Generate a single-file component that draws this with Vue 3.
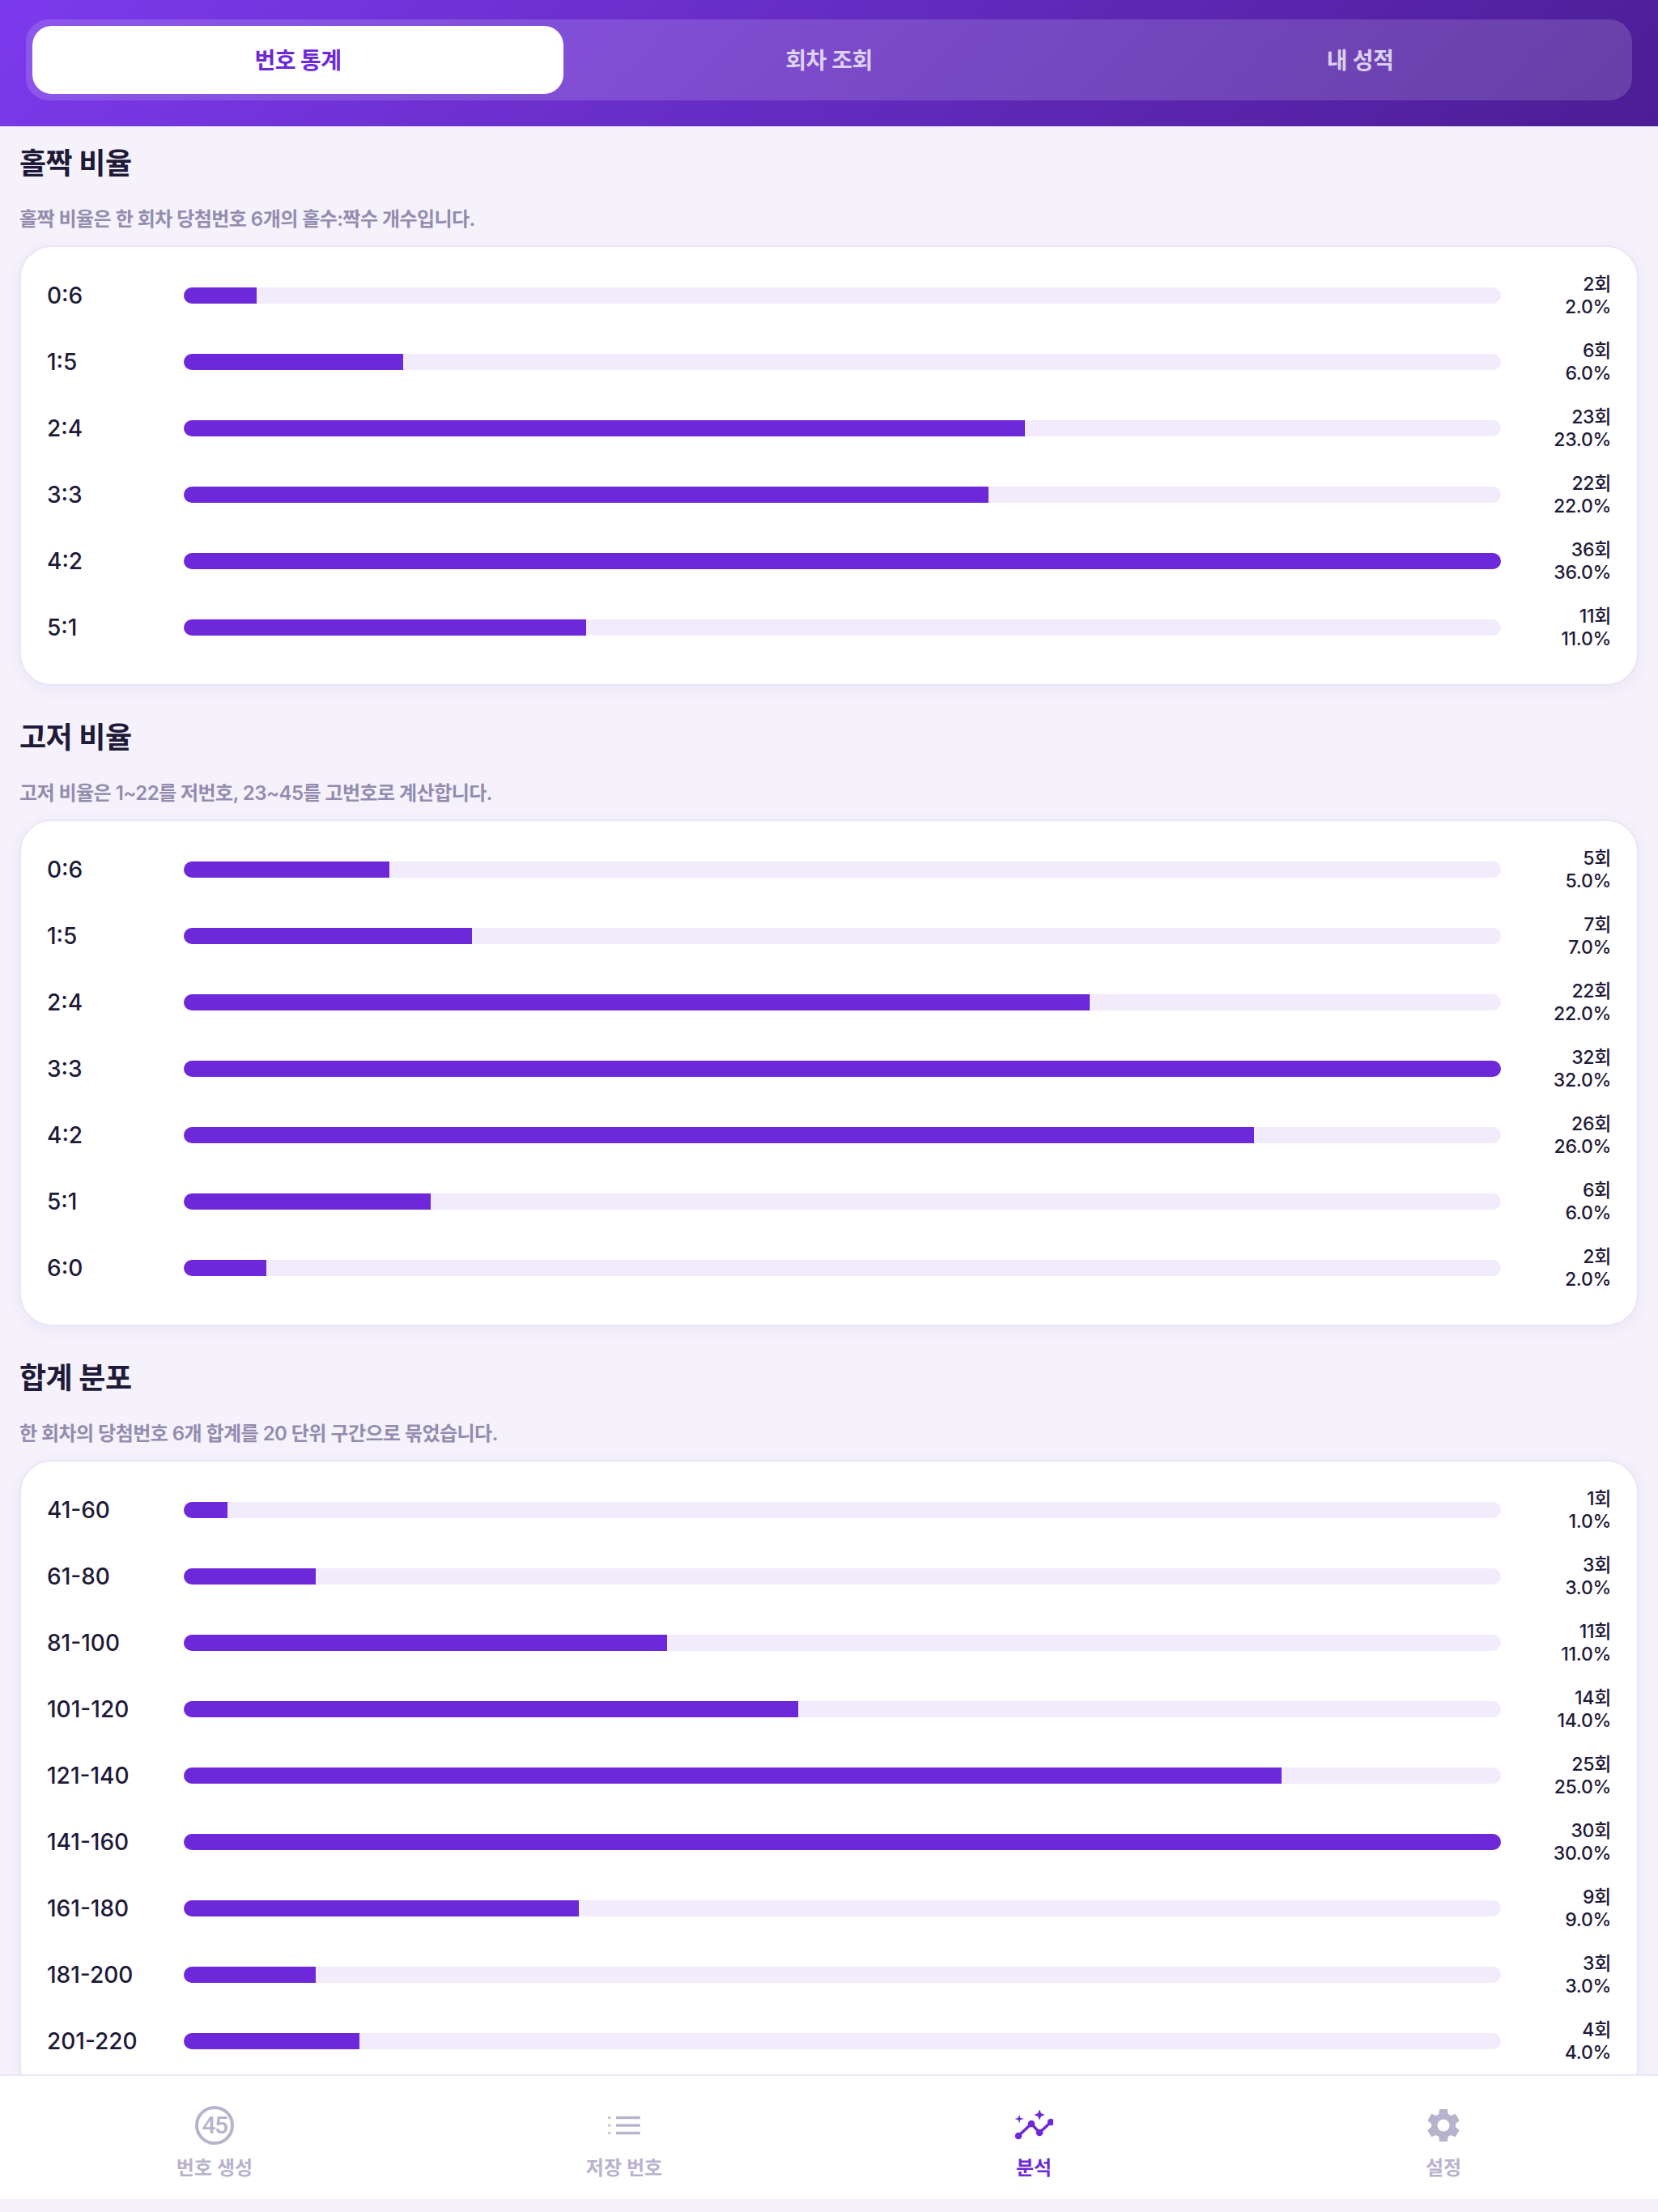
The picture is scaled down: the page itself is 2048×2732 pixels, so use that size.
<script setup>
const tabs = ['번호 통계', '회차 조회', '내 성적']
const sections = [
  {
    title: '홀짝 비율',
    desc: '홀짝 비율은 한 회차 당첨번호 6개의 홀수:짝수 개수입니다.',
    rows: [['0:6', 2], ['1:5', 6], ['2:4', 23], ['3:3', 22], ['4:2', 36], ['5:1', 11]],
    max: 36,
  },
  {
    title: '고저 비율',
    desc: '고저 비율은 1~22를 저번호, 23~45를 고번호로 계산합니다.',
    rows: [['0:6', 5], ['1:5', 7], ['2:4', 22], ['3:3', 32], ['4:2', 26], ['5:1', 6], ['6:0', 2]],
    max: 32,
  },
  {
    title: '합계 분포',
    desc: '한 회차의 당첨번호 6개 합계를 20 단위 구간으로 묶었습니다.',
    rows: [['41-60', 1], ['61-80', 3], ['81-100', 11], ['101-120', 14], ['121-140', 25], ['141-160', 30], ['161-180', 9], ['181-200', 3], ['201-220', 4]],
    max: 30,
  },
]
</script>

<template>
  <div class="app">
    <header class="header">
      <div class="tabs">
        <div v-for="(t, i) in tabs" :key="t" class="tab" :class="{ active: i === 0 }">{{ t }}</div>
      </div>
    </header>
    <main class="main">
      <section v-for="s in sections" :key="s.title" class="section">
        <h2 class="title">{{ s.title }}</h2>
        <p class="desc">{{ s.desc }}</p>
        <div class="card">
          <div v-for="r in s.rows" :key="r[0]" class="row">
            <div class="label">{{ r[0] }}</div>
            <div class="track"><div class="fill" :style="{ width: (r[1] / s.max) * 100 + '%' }"></div></div>
            <div class="value"><div>{{ r[1] }}회</div><div>{{ r[1].toFixed(1) }}%</div></div>
          </div>
        </div>
      </section>
    </main>
    <nav class="nav">
      <div class="nav-item">
        <div class="icon"><div class="ball">45</div></div>
        <span>번호 생성</span>
      </div>
      <div class="nav-item">
        <div class="icon">
          <svg width="48" height="48" viewBox="0 0 48 48" fill="#b8b2cc">
            <circle cx="5.700" cy="14.500" r="1.600" /><circle cx="5.700" cy="24" r="1.600" /><circle cx="5.700" cy="33.500" r="1.600" />
            <rect x="14" y="12.800" width="29.700" height="3.400" /><rect x="14" y="22.300" width="29.700" height="3.400" /><rect x="14" y="31.800" width="29.700" height="3.400" />
          </svg>
        </div>
        <span>저장 번호</span>
      </div>
      <div class="nav-item on">
        <div class="icon">
          <svg width="48" height="48" viewBox="0 0 48 48">
            <path d="M5 37 L21 22 L31 33 L45 20" fill="none" stroke="#6d28d9" stroke-width="3.500" />
            <circle cx="5" cy="37" r="4.300" fill="#6d28d9" /><circle cx="21" cy="22" r="4.300" fill="#6d28d9" /><circle cx="31" cy="33" r="4.300" fill="#6d28d9" /><circle cx="45" cy="20" r="4.300" fill="#6d28d9" />
            <path d="M31 4.400 L33 9 L37.500 11 L33 13 L31 17.600 L29 13 L24.500 11 L29 9 Z" fill="#6d28d9" />
            <path d="M6 10.500 L7.300 14.700 L11.500 16 L7.300 17.300 L6 21.500 L4.700 17.300 L.5 16 L4.700 14.700 Z" fill="#6d28d9" />
          </svg>
        </div>
        <span>분석</span>
      </div>
      <div class="nav-item">
        <div class="icon">
          <svg class="gear" width="50" height="50" viewBox="0 0 24 24" fill="#b8b2cc">
            <path fill-rule="evenodd" d="M19.14 12.94c.04-.3.06-.61.06-.94 0-.32-.02-.64-.07-.94l2.03-1.58a.49.49 0 0 0 .12-.61l-1.92-3.32a.49.49 0 0 0-.59-.22l-2.39.96c-.5-.38-1.030-.7-1.620-.94l-.36-2.540a.48.48 0 0 0-.48-.41h-3.840a.48.48 0 0 0-.47.41l-.36 2.540c-.59.24-1.130.57-1.620.94l-2.390-.96a.48.48 0 0 0-.59.22L2.740 8.870a.48.48 0 0 0 .12.61l2.030 1.580c-.05.3-.09.63-.09.94s.02.64.07.94l-2.030 1.580a.49.49 0 0 0-.12.61l1.920 3.320c.12.22.37.29.59.22l2.390-.96c.5.38 1.030.7 1.620.94l.36 2.540c.05.24.24.41.48.41h3.840c.24 0 .44-.17.47-.41l.36-2.540c.59-.24 1.130-.56 1.620-.94l2.390.96c.22.08.47 0 .59-.22l1.920-3.320a.48.48 0 0 0-.12-.61l-2.010-1.580zM12 15.600A3.610 3.610 0 0 1 8.400 12 3.610 3.610 0 0 1 12 8.400a3.610 3.610 0 0 1 3.600 3.600 3.610 3.610 0 0 1-3.600 3.600z" />
          </svg>
        </div>
        <span>설정</span>
      </div>
    </nav>
  </div>
</template>

<style scoped>
.app {
  width: 2048px;
  height: 2732px;
  display: flex;
  flex-direction: column;
  overflow: hidden;
  background: #f5f2fc;
  font-family: Inter, "Noto Sans CJK KR", sans-serif;
  color: #1e1a38;
}
.header {
  flex: none;
  height: 156px;
  box-sizing: border-box;
  padding: 24px 32px 0;
  background: linear-gradient(135deg, #7c3aed 0%, #4c1d95 100%);
}
.tabs {
  display: flex;
  height: 100px;
  box-sizing: border-box;
  padding: 8px;
  border-radius: 28px;
  background: rgba(255, 255, 255, 0.15);
}
.tab {
  flex: 1;
  display: flex;
  align-items: center;
  justify-content: center;
  padding-bottom: 2px;
  border-radius: 24px;
  font-size: 28px;
  font-weight: 600;
  letter-spacing: -0.5px;
  color: rgba(255, 255, 255, 0.75);
}
.tab.active {
  background: #fff;
  color: #6d28d9;
  font-weight: 700;
}
.main {
  flex: 1;
  min-height: 0;
  overflow: hidden;
  padding: 0 24px;
  box-sizing: border-box;
}
.section {
  margin-bottom: 18px;
}
.title {
  margin: 0;
  padding-top: 24px;
  font-size: 36px;
  line-height: 44px;
  font-weight: 700;
  letter-spacing: -0.5px;
}
.desc {
  margin: 29px 0 0;
  font-size: 24px;
  line-height: 36px;
  font-weight: 600;
  letter-spacing: -0.55px;
  color: #938cae;
}
.card {
  margin-top: 14px;
  padding: 30px 32px 40px;
  background: #fff;
  border: 2px solid #ebe6f6;
  border-radius: 40px;
  display: flex;
  flex-direction: column;
  gap: 22px;
  box-shadow: 0 4px 20px rgba(76, 29, 149, 0.06);
}
.row {
  display: flex;
  align-items: center;
  height: 60px;
}
.label {
  flex: none;
  width: 169px;
  font-size: 28px;
  font-weight: 500;
}
.track {
  flex: 1;
  height: 20px;
  border-radius: 10px;
  overflow: hidden;
  background: #f1ebfb;
}
.fill {
  height: 100%;
  background: #6d28d9;
}
.value {
  flex: none;
  width: 136px;
  text-align: right;
  font-size: 23px;
  line-height: 28px;
  font-weight: 500;
  letter-spacing: -0.3px;
}
.nav {
  flex: none;
  height: 170px;
  box-sizing: border-box;
  display: flex;
  padding: 0 12px;
  background: linear-gradient(#fff, #fff) top / 100% 152px no-repeat, #f5f2fc;
  border-top: 2px solid #ebe6f6;
}
.nav-item {
  flex: 1;
  display: flex;
  flex-direction: column;
  align-items: center;
  padding-top: 37px;
  font-size: 24px;
  line-height: 32px;
  font-weight: 600;
  color: #b8b2cc;
}
.nav-item.on {
  color: #6d28d9;
}
.icon {
  width: 48px;
  height: 48px;
  margin-bottom: 13px;
  display: flex;
  align-items: center;
  justify-content: center;
}
.gear {
  flex: none;
}
.ball {
  width: 48px;
  height: 48px;
  flex: none;
  box-sizing: border-box;
  border: 4px solid #b8b2cc;
  border-radius: 50%;
  display: flex;
  align-items: center;
  justify-content: center;
  font-family: Roboto, sans-serif;
  font-size: 30px;
  font-weight: 500;
  letter-spacing: -1.5px;
}
</style>
